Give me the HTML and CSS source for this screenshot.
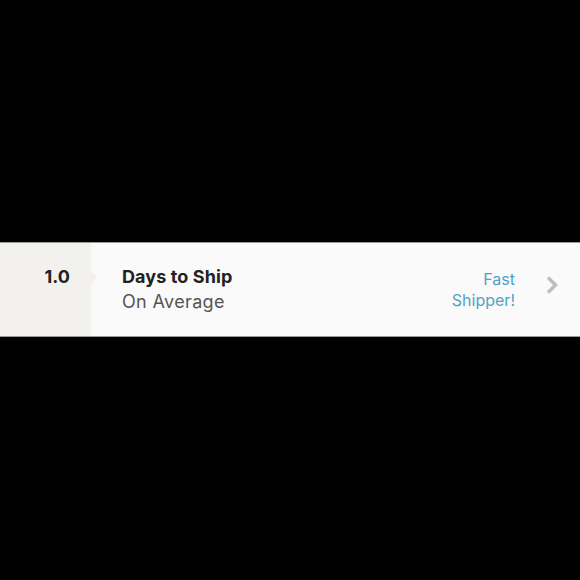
FILE: index.html
```html
<!DOCTYPE html>
<html>
<head>
<meta charset="utf-8">
<link rel="stylesheet" href="styles.css">
</head>
<body>
<div class="row">
  <div class="score">1.0</div>
  <div class="main">
    <div class="title">Days to Ship</div>
    <div class="sub">On Average</div>
  </div>
  <div class="badge">Fast<br>Shipper!</div>
  <svg class="chev" width="14" height="20" viewBox="0 0 14 20"><path d="M3 2.5 L10.5 10 L3 17.5" fill="none" stroke="#bdbdbd" stroke-width="3.4"/></svg>
</div>
</body>
</html>
```
FILE: styles.css
```css
html, body {
  margin: 0;
  height: 100%;
  background: #000;
}
body {
  display: flex;
  flex-direction: column;
  justify-content: flex-start;
  font-family: "Inter", "Open Sans", sans-serif;
}
.row {
  margin-top: 242px;
  height: 93px;
  display: flex;
  align-items: flex-start;
  background: #fafafa;
  border-top: 1px solid #9a9a9a;
  border-bottom: 1px solid #9a9a9a;
}
.score {
  position: relative;
  width: 91px;
  height: 100%;
  box-sizing: border-box;
  background: #f2f1ee;
  padding: 22px 21px 0 0;
  text-align: right;
  font-weight: 700;
  font-size: 18px;
  line-height: 24px;
  color: #222;
}
.score::after {
  content: "";
  position: absolute;
  left: 91px;
  top: 27px;
  border-left: 6px solid #f2f1ee;
  border-top: 7px solid transparent;
  border-bottom: 7px solid transparent;
}
.main {
  flex: 1;
  padding: 22px 0 0 31px;
}
.title {
  font-weight: 700;
  font-size: 18px;
  line-height: 24px;
  letter-spacing: 0.1px;
  color: #222;
}
.sub {
  font-size: 18px;
  line-height: 26px;
  letter-spacing: 0.35px;
  color: #555;
}
.badge {
  margin-top: 26px;
  text-align: right;
  font-size: 16px;
  line-height: 21px;
  color: #4fa3c7;
  margin-right: 30px;
}
.chev {
  margin-top: 32px;
  margin-right: 21px;
}
```
